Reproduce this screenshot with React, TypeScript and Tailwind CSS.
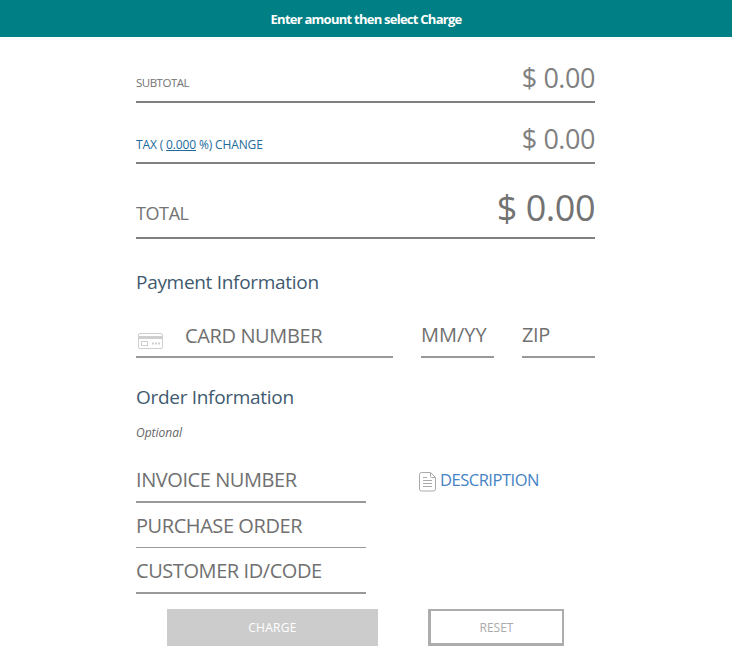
import type { ReactNode } from "react";

function AmountRow({ row, label, amount }: { row: string; label: ReactNode; amount: ReactNode }) {
  return (
    <div className={`flex justify-between border-b-2 border-[#808080] whitespace-pre text-[#737373] ${row}`}>
      {label}
      {amount}
    </div>
  );
}

function Field({ box, children }: { box: string; children: ReactNode }) {
  return (
    <div className={`flex items-start border-[#999999] text-[20px] leading-[28px] whitespace-pre text-[#707070] ${box}`}>
      {children}
    </div>
  );
}

function CardIcon() {
  return (
    <svg className="mt-[12px] ml-[2px] shrink-0" width="25" height="17" viewBox="0 0 25 17" fill="none" stroke="#cfcfcf">
      <rect x="0.5" y="0.5" width="24" height="15" rx="1.5" />
      <path d="M1 4.500h23" strokeWidth="3" />
      <rect x="3.500" y="8.500" width="6" height="4" />
      <path d="M14 10.500h2M17 10.500h2M20 10.500h2" strokeWidth="2" />
    </svg>
  );
}

function DocumentIcon() {
  return (
    <svg className="mt-[6px] shrink-0" width="18" height="20" viewBox="0 0 18 20" fill="none" stroke="#aaa">
      <path d="M2.500.5h9l5 5v11.500a2 2 0 0 1-2 2h-12a2 2 0 0 1-2-2v-14.500a2 2 0 0 1 2-2Z" />
      <path d="M11.500 1v3.500a1 1 0 0 0 1 1h4M4 5.500h4M4 8.500h9M4 11.500h9M4 14.500h9" />
    </svg>
  );
}

export default function App() {
  return (
    <div className="h-[646px] overflow-hidden bg-white font-['Open_Sans','Noto_Sans',sans-serif]">
      <header className="flex h-[37px] justify-center bg-[#008084] pt-[9px] text-[13px] leading-[20px] font-bold whitespace-pre text-white">
        <span className="tracking-[-0.75px]">Enter amount then select Charge</span>
      </header>
      <main className="ml-[136px] w-[459px]">
        <AmountRow
          row="h-[66px]"
          label={<span className="pt-[37px] text-[11.5px] leading-[18px] tracking-[-0.5px]">SUBTOTAL</span>}
          amount={<span className="pt-[23px] text-[27px] leading-[36px] tracking-[-0.45px] text-[#808080]">$ 0.00</span>}
        />
        <AmountRow
          row="h-[61px]"
          label={
            <span className="pt-[33px] text-[12px] leading-[18px] tracking-[-0.14px] text-[#216a9c]">
              TAX ( <span className="underline">0.000</span> %) CHANGE
            </span>
          }
          amount={<span className="pt-[18px] text-[27px] leading-[36px] tracking-[-0.45px] text-[#808080]">$ 0.00</span>}
        />
        <AmountRow
          row="h-[75px]"
          label={<span className="pt-[36px] text-[18px] leading-[26px] tracking-[-0.4px]">TOTAL</span>}
          amount={<span className="pt-[20px] text-[36px] leading-[48px] tracking-[-0.5px]">$ 0.00</span>}
        />
        <h2 className="mt-[29px] text-[19px] leading-[28px] tracking-[-0.3px] whitespace-pre text-[#3f5a70]">Payment Information</h2>
        <div className="mt-[25px] flex justify-between">
          <Field box="h-[37px] w-[257px] border-b-2">
            <CardIcon />
            <span className="mt-px ml-[22px] tracking-[-0.38px]">CARD NUMBER</span>
          </Field>
          <Field box="h-[37px] w-[73px] border-b-2">MM/YY</Field>
          <Field box="h-[37px] w-[73px] border-b-2 tracking-[-0.4px]">ZIP</Field>
        </div>
        <h2 className="mt-[25px] text-[19px] leading-[28px] tracking-[-0.3px] whitespace-pre text-[#3f5a70]">Order Information</h2>
        <p className="mt-[12px] text-[12px] leading-[20px] text-[#666] italic">Optional</p>
        <div className="mt-[23px] flex">
          <div className="w-[230px] tracking-[-0.43px]">
            <Field box="h-[37px] border-b-2">INVOICE NUMBER</Field>
            <Field box="mt-[9px] h-[36px] border-b">PURCHASE ORDER</Field>
            <Field box="mt-[9px] h-[37px] border-b-2">CUSTOMER ID/CODE</Field>
          </div>
          <div className="ml-[53px] flex items-start text-[16.5px] leading-[28px] tracking-[-0.48px] text-[#4683c4]">
            <DocumentIcon />
            <span className="ml-[3px]">DESCRIPTION</span>
          </div>
        </div>
        <div className="mt-[15px] ml-[31px] flex text-[12px]">
          <button className="h-[37px] w-[211px] bg-[#cccccc] tracking-[0.3px] text-white">CHARGE</button>
          <button className="ml-[50px] h-[37px] w-[136px] border-2 border-b-[3px] border-l-[3px] border-[#adadad] pt-[2px] text-[#aaa]">
            RESET
          </button>
        </div>
      </main>
    </div>
  );
}
